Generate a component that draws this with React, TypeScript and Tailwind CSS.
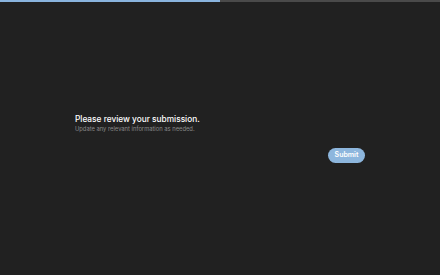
export default function App() {
  return (
    <div className="relative h-[275px] w-[440px] bg-[#212121] flex flex-col" style={{ fontFamily: "Inter, 'Noto Sans', sans-serif" }}>
      <div className="h-[2px] w-full bg-[#4a4a4a] flex">
        <div className="h-full w-1/2 bg-[#8ab4de]" />
      </div>
      <div className="flex-1 flex items-center justify-center">
        <div className="w-[290px] flex flex-col">
          <div className="text-[8.3px] leading-[10px] font-medium text-white">Please review your submission.</div>
          <div className="text-[5.8px] leading-[7px] text-[#8a8a8a] mt-[1px]">Update any relevant information as needed.</div>
          <div className="flex justify-end mt-[16px]">
            <button className="h-[15px] w-[37px] rounded-full bg-[#8db6dd] text-white text-[7px] font-semibold flex items-center justify-center">Submit</button>
          </div>
        </div>
      </div>
    </div>
  );
}
